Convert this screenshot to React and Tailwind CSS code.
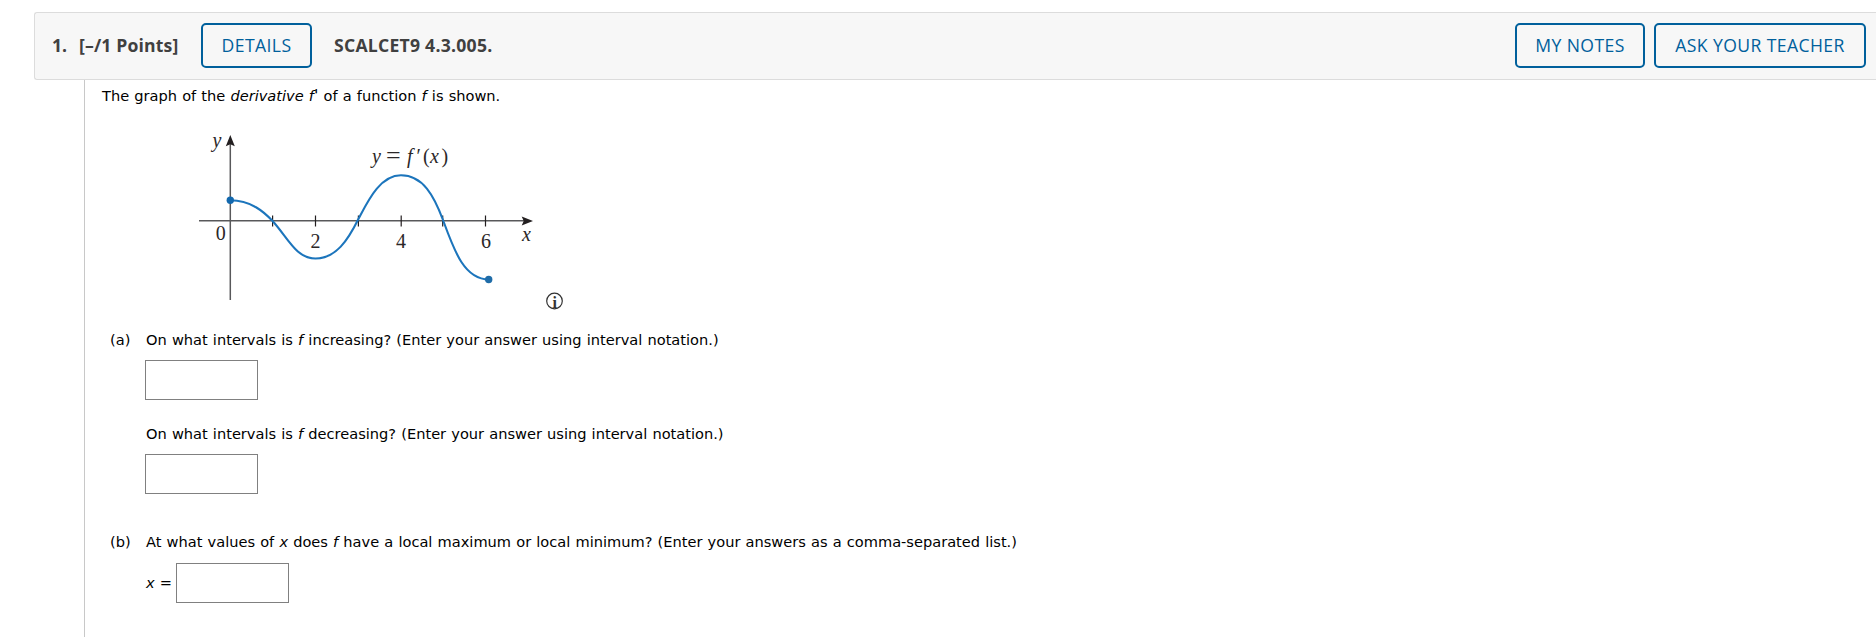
function HeaderButton({ children, className }) {
  return (
    <button
      className={`h-[45px] shrink-0 rounded-[5px] border-2 border-[#00609c] text-center font-['Open_Sans',sans-serif] text-[17.6px] leading-none font-medium tracking-[0.4px] whitespace-nowrap text-[#00609c] ${className}`}
    >
      {children}
    </button>
  );
}

function Line({ children, className = "" }) {
  return (
    <p className={`h-5 pl-px text-[14.6px] leading-5 [word-spacing:0.5px] whitespace-nowrap ${className}`}>
      {children}
    </p>
  );
}

function AnswerBox({ label, className = "" }) {
  return (
    <input
      aria-label={label}
      className={`block h-10 w-[113px] border border-[#808080] bg-white px-2 outline-none ${className}`}
    />
  );
}

function Graph() {
  return (
    <svg
      className="block h-[190px] w-[400px] font-['Liberation_Serif',serif]"
      viewBox="190 120 400 190"
      fill="none"
    >
      <g stroke="#58585a" strokeWidth="1.5">
        <path d="M199 220.7H524" />
        <path d="M230.3 142V300" />
      </g>
      <g stroke="#231f20" strokeWidth="1.2">
        <path d="M272.6 215.5v11M315.5 215.5v11M358.4 215.5v11M401.2 215.5v11M442.7 215.5v11M485.5 215.5v11" />
      </g>
      <path d="M230.3 135l4.5 11.3-4.5-2-4.5 2z" fill="#231f20" />
      <path d="M533 221l-11.3 4.5 2-4.5-2-4.5z" fill="#231f20" />
      <path
        d="M230.3 200.3C251 200.3 264 212 272.6 221C288 238 296 258.5 315.5 258.5C336 258.5 348 240 358.4 219C368 201 380 175.3 401 175.3C423 175.3 434 196 443 220C454 250 464 279.5 489 279.5"
        stroke="#1c75bc"
        strokeWidth="2.1"
      />
      <circle cx="230.3" cy="200.3" r="3.7" fill="#1268ae" />
      <circle cx="488.7" cy="279.5" r="3.7" fill="#1f6ca8" />
      <g fill="#2b2728" fontSize="20">
        <text x="212.5" y="147" fontStyle="italic">y</text>
        <text x="220.7" y="240" textAnchor="middle">0</text>
        <text x="315.5" y="248" textAnchor="middle">2</text>
        <text x="401" y="248" textAnchor="middle">4</text>
        <text x="486" y="248" textAnchor="middle">6</text>
        <text x="522" y="240.5" fontStyle="italic">x</text>
        <text x="372" y="162.5" fontStyle="italic">y</text>
        <text x="386" y="164" fontSize="26">=</text>
        <text x="407" y="162.5" fontStyle="italic">f</text>
        <text x="416.5" y="162.5">′</text>
        <text x="423" y="162.5">(</text>
        <text x="430" y="162.5" fontStyle="italic">x</text>
        <text x="441.5" y="162.5">)</text>
      </g>
      <circle cx="554.5" cy="301" r="7.8" stroke="#333" strokeWidth="1.2" />
      <text x="554.7" y="307.5" textAnchor="middle" fontSize="16" fontWeight="bold" fill="#333">i</text>
    </svg>
  );
}

export default function App() {
  return (
    <div className="h-[637px] w-full overflow-hidden bg-white pt-3 pl-[34px] font-['DejaVu_Sans',Verdana,sans-serif] text-black">
      <header className="flex h-[68px] items-center rounded-l-[3px] border border-r-0 border-[#dcdcdc] bg-[#f7f7f7] pr-[10px] pb-px pl-[17px] font-['Open_Sans',sans-serif] text-[17.6px] font-bold text-[#404040]">
        <div className="w-[26px] shrink-0">1.</div>
        <div className="w-[123px] shrink-0 pl-px tracking-[0.15px] whitespace-nowrap">[–/1 Points]</div>
        <HeaderButton className="w-[111px]">DETAILS</HeaderButton>
        <div className="ml-[22px] tracking-[0.25px] whitespace-nowrap">SCALCET9 4.3.005.</div>
        <div className="ml-auto flex gap-[9px]">
          <HeaderButton className="w-[130px]">MY NOTES</HeaderButton>
          <HeaderButton className="w-[212px]">ASK YOUR TEACHER</HeaderButton>
        </div>
      </header>
      <main className="ml-[50px] h-[557px] border-l border-[#c8c8c8] pt-[6px] pl-4">
        <Line>
          The graph of the <i>derivative f<span className="text-[16px] leading-none">'</span></i> of a function <i>f</i> is shown.
        </Line>
        <div className="mt-[14px] ml-[89px]">
          <Graph />
        </div>
        <section className="mt-5 grid grid-cols-[36px_1fr] pl-2">
          <Line>(a)</Line>
          <div>
            <Line>
              On what intervals is <i>f</i> increasing? (Enter your answer using interval notation.)
            </Line>
            <AnswerBox label="Increasing intervals" className="mt-[10px]" />
            <Line className="mt-6">
              On what intervals is <i>f</i> decreasing? (Enter your answer using interval notation.)
            </Line>
            <AnswerBox label="Decreasing intervals" className="mt-[10px]" />
          </div>
        </section>
        <section className="mt-[38px] grid grid-cols-[36px_1fr] pl-2">
          <Line>(b)</Line>
          <div>
            <Line>
              At what values of <i>x</i> does <i>f</i> have a local maximum or local minimum? (Enter your answers as a comma-separated list.)
            </Line>
            <div className="mt-[11px] flex items-center">
              <Line className="w-[31px]">
                <i>x</i> =
              </Line>
              <AnswerBox label="x values" />
            </div>
          </div>
        </section>
      </main>
    </div>
  );
}
